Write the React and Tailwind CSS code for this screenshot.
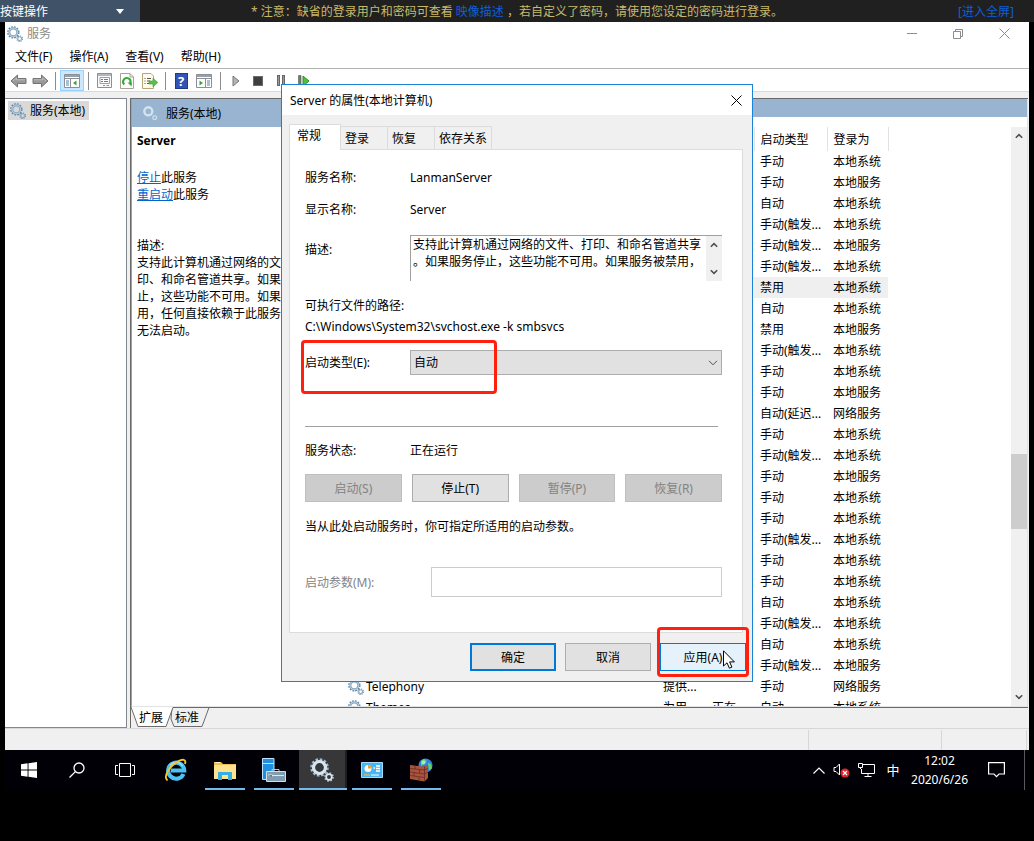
import { useState } from 'react'

const M = '手动'
const A = '自动'
const T = '手动(触发...'
const SYS = '本地系统'
const LOC = '本地服务'
const NET = '网络服务'

const services = [
  { start: M, user: SYS },
  { start: M, user: LOC },
  { start: A, user: SYS },
  { start: T, user: SYS },
  { start: T, user: LOC },
  { start: T, user: SYS },
  { start: '禁用', user: SYS, selected: true },
  { start: A, user: SYS },
  { start: '禁用', user: LOC },
  { start: T, user: SYS },
  { start: M, user: SYS },
  { start: M, user: LOC },
  { start: '自动(延迟...', user: NET },
  { start: M, user: SYS },
  { start: T, user: SYS },
  { start: M, user: LOC },
  { start: M, user: SYS },
  { start: M, user: SYS },
  { start: T, user: SYS },
  { start: M, user: SYS },
  { start: M, user: SYS },
  { start: A, user: SYS },
  { start: T, user: SYS },
  { start: A, user: SYS },
  { start: T, user: LOC },
  { name: 'Telephony', desc: '提供...', start: M, user: NET },
  { name: 'Themes', desc: '为用...', status: '正在...', start: A, user: SYS },
]

function Gears({ className = 'w-4 h-4', light = false }) {
  const main = light ? '#d8e6f0' : '#86a9c3'
  const edge = light ? '#9fb9cc' : '#5d829d'
  return (
    <svg viewBox="0 0 24 24" className={`shrink-0 ${className}`} fill="none">
      <circle cx="9.500" cy="9.500" r="8" stroke={edge} strokeWidth="2.600" strokeDasharray="2.500 1.690" />
      <circle cx="9.500" cy="9.500" r="6" stroke={main} strokeWidth="3.200" />
      <circle cx="9.500" cy="9.500" r="6.600" stroke="#cfe3f1" strokeWidth="1" />
      <circle cx="19" cy="19" r="4" stroke={edge} strokeWidth="1.800" strokeDasharray="1.600 1.540" />
      <circle cx="19" cy="19" r="2.800" stroke={main} strokeWidth="1.700" />
    </svg>
  )
}

function Chevron({ dir = 'down', className = 'w-2 h-[6px]', width = 2 }) {
  return (
    <svg viewBox="0 0 10 6" className={className} fill="none" stroke="#505050" strokeWidth={width}>
      <path d={dir === 'up' ? 'M1 5.200L5 1.200L9 5.200' : 'M1 .8L5 4.800L9 .8'} />
    </svg>
  )
}

function Close({ color }) {
  return (
    <svg viewBox="0 0 11 11" className="w-[11px] h-[11px]" stroke={color} fill="none">
      <path d="M.5 .5L10.500 10.500M10.500 .5L.5 10.500" />
    </svg>
  )
}

function Arrow({ flip }) {
  return (
    <svg viewBox="0 0 17 14" className={`w-[17px] h-[14px] ${flip ? '-scale-x-100' : ''}`}>
      <path d="M1 7L7.500 1V4.500H16V9.500H7.500V13Z" fill="#999" stroke="#757575" strokeLinejoin="round" />
      <path d="M3 7L6.500 4V5.800H15" fill="none" stroke="#bdbdbd" />
    </svg>
  )
}

function Panes({ right }) {
  return (
    <svg viewBox="0 0 16 14" className="w-4 h-[14px]">
      <path d="M.5 .5H15.500V13.500H.5Z" fill="#fff" stroke="#8b8f96" />
      <path d="M1 1H15V3H1Z" fill="#9aa0a8" />
      <path d="M1 4.500H15" stroke="#8b8f96" />
      <path d={right ? 'M9.500 5V13' : 'M6.500 5V13'} stroke="#8b8f96" />
      <path d={right ? 'M11 7H14M11 9H14M11 11H14' : 'M2 7H5M2 9H5M2 11H5'} stroke="#5a7fae" />
      <path d={right ? 'M3.500 6.500L7 9L3.500 11.500Z' : 'M12.500 6.500L9 9L12.500 11.500Z'} fill="#37a637" />
    </svg>
  )
}

function Separator() {
  return <span className="w-px h-[18px] mx-1 bg-[#8d8d8d]" />
}

function ToolButton({ label, wide, active, children }) {
  return (
    <button
      type="button"
      aria-label={label}
      className={`h-[21px] flex items-center justify-center ${wide ? 'w-6' : 'w-[22px]'} ${
        active ? 'bg-[#cce8ff] border border-[#99d1ff]' : ''
      }`}
    >
      {children}
    </button>
  )
}

function Toolbar() {
  return (
    <div className="flex items-center h-[23px] pl-[2px] pt-px border-b border-[#dadada]">
      <ToolButton label="后退"><Arrow /></ToolButton>
      <ToolButton label="前进"><Arrow flip /></ToolButton>
      <Separator />
      <ToolButton label="显示控制台树" active wide><Panes /></ToolButton>
      <Separator />
      <ToolButton label="属性">
        <svg viewBox="0 0 15 15" className="w-[15px] h-[15px]">
          <path d="M.5 .5H14.500V14.500H.5Z" fill="#fafafa" stroke="#8b8f96" />
          <path d="M1 1H14V3H1Z" fill="#b3b8be" />
          <path d="M3 4.500H12.500V10.500H3Z" fill="#fff" stroke="#9aa0a8" />
          <path d="M4 6.500H6M7 6.500H11M4 8.500H6M7 8.500H11" stroke="#5a7fae" />
          <path d="M6 12.500H8M9.500 12.500H12" stroke="#8b8f96" />
        </svg>
      </ToolButton>
      <ToolButton label="刷新" wide>
        <svg viewBox="0 0 14 16" className="w-[14px] h-4">
          <path d="M.5 .5H10L13.500 4V15.500H.5Z" fill="#fff" stroke="#a8a390" />
          <path d="M10 .5V4H13.500" fill="none" stroke="#a8a390" />
          <path d="M4.300 11.500A3.700 3.700 0 1 1 10.300 10" fill="none" stroke="#35a835" strokeWidth="2" />
          <path d="M7.500 9.500H12L11.500 13.500Z" fill="#35a835" />
        </svg>
      </ToolButton>
      <ToolButton label="导出列表">
        <svg viewBox="0 0 16 16" className="w-4 h-4">
          <path d="M.5 .5H9L11.500 3V15.500H.5Z" fill="#fffceb" stroke="#b5a878" />
          <path d="M2.500 5.500H3.500M5 5.500H9M2.500 8H3.500M5 8H8M2.500 10.500H3.500M5 10.500H8" stroke="#555" />
          <path d="M7 8H11V5.200L15.800 9.500L11 13.800V11H7Z" fill="#56c247" stroke="#3a9d33" strokeWidth=".6" />
        </svg>
      </ToolButton>
      <Separator />
      <ToolButton label="帮助">
        <span className="w-[13px] h-4 bg-[#3354b5] border border-[#1f3a8a] text-white text-[13px] leading-[14px] font-bold">?</span>
      </ToolButton>
      <ToolButton label="显示操作窗格" wide><Panes right /></ToolButton>
      <Separator />
      <ToolButton label="启动服务">
        <svg viewBox="0 0 8 12" className="w-2 h-3"><path d="M1 1L7 6L1 11Z" fill="#b5b5b5" stroke="#777" /></svg>
      </ToolButton>
      <ToolButton label="停止服务"><span className="w-[10px] h-[10px] bg-[#3f3f3f] border border-[#6a6a6a]" /></ToolButton>
      <ToolButton label="暂停服务" wide>
        <span className="flex gap-[2px]">
          <span className="w-[3px] h-[11px] bg-[#999] border border-[#666]" />
          <span className="w-[3px] h-[11px] bg-[#999] border border-[#666]" />
        </span>
      </ToolButton>
      <ToolButton label="重启动服务">
        <svg viewBox="0 0 12 12" className="w-3 h-3">
          <path d="M.5 .5H3V11.500H.5Z" fill="#777" stroke="#555" strokeWidth=".6" />
          <path d="M5 1L11 6L5 11Z" fill="#4cc33a" stroke="#2a8f22" />
        </svg>
      </ToolButton>
    </div>
  )
}

function ServiceTable() {
  return (
    <table className="table-fixed w-[543px] h-fit border-collapse text-left">
      <colgroup>
        <col className="w-[312px]" />
        <col className="w-[49px]" />
        <col className="w-[48px]" />
        <col className="w-[73px]" />
        <col className="w-[61px]" />
      </colgroup>
      <thead>
        <tr className="h-6">
          <th className="p-0 pl-5 font-normal border-r border-[#e2e2e2]">名称</th>
          <th className="p-0 pl-[6px] font-normal border-r border-[#e2e2e2]">描述</th>
          <th className="p-0 pl-[6px] font-normal border-r border-[#e2e2e2]">状态</th>
          <th className="p-0 pl-[6px] font-normal border-r border-[#e2e2e2]">启动类型</th>
          <th className="p-0 pl-[6px] font-normal border-r border-[#e2e2e2]">登录为</th>
        </tr>
      </thead>
      <tbody>
        {services.map((s, i) => (
          <tr key={i} className={`h-[21px] whitespace-nowrap ${s.selected ? 'bg-[#efefef]' : ''}`}>
            <td className="p-0 pl-[3px]">
              {s.name && (
                <span className="flex items-center gap-[2px]">
                  <Gears />
                  {s.name}
                </span>
              )}
            </td>
            <td className="p-0 pl-[6px]">{s.desc}</td>
            <td className="p-0 pl-[6px]">{s.status}</td>
            <td className="p-0 pl-[6px]">{s.start}</td>
            <td className="p-0 pl-[6px]">{s.user}</td>
          </tr>
        ))}
      </tbody>
    </table>
  )
}

function Sheets() {
  return (
    <div className="relative h-[21px] bg-[#f0f0f0] border-t border-[#696969]">
      <svg viewBox="0 0 80 20" className="absolute left-0 -top-px w-20 h-5" fill="none" stroke="#6b6b6b">
        <path d="M41 .5H78L71 19.500H43L40 12Z" fill="#f0f0f0" />
        <path d="M0 0L7 19.500H35L42 0Z" fill="#fff" stroke="none" />
        <path d="M0 0L7 19.500H35L42 .5" />
      </svg>
      <div className="relative flex gap-3 pl-2 leading-[20px]">
        <button type="button">扩展</button>
        <button type="button">标准</button>
      </div>
    </div>
  )
}

function PushButton({ children, disabled, className = 'border-[#adadad] bg-[#e1e1e1]' }) {
  return (
    <button
      type="button"
      disabled={disabled}
      className={`h-7 border text-center disabled:bg-[#ccc] disabled:border-[#bfbfbf] disabled:text-[#838383] ${className}`}
    >
      {children}
    </button>
  )
}

const tabs = ['常规', '登录', '恢复', '依存关系']

function PropertiesDialog() {
  const [tab, setTab] = useState(0)
  const [startType, setStartType] = useState('自动')

  return (
    <div role="dialog" aria-label="Server 的属性" className="absolute left-[276px] top-[62px] w-[472px] bg-[#f0f0f0] border border-[#1883d7]">
      <div className="flex items-center justify-between h-[30px] pl-2 pr-[10px] bg-white">
        <h2>Server 的属性(本地计算机)</h2>
        <button type="button" aria-label="关闭"><Close color="#000" /></button>
      </div>

      <div className="pl-[7px] pr-[9px] pt-[9px] pb-[10px]">
        <div className="flex items-end">
          {tabs.map((t, i) => (
            <button
              key={t}
              type="button"
              onClick={() => setTab(i)}
              className={
                i === tab
                  ? 'relative -mb-px h-[26px] w-[52px] pl-[7px] pb-1 text-left bg-white border border-b-0 border-[#dcdcdc]'
                  : 'h-[23px] px-[4px] min-w-[47px] text-left border border-l-0 border-b-0 border-[#dcdcdc]'
              }
            >
              {t}
            </button>
          ))}
        </div>

        <div className="bg-white border border-[#dcdcdc] pl-[15px] pr-5 pt-3 pb-[35px]">
          <dl className="grid grid-cols-[105px_1fr] leading-8">
            <dt>服务名称:</dt>
            <dd>LanmanServer</dd>
            <dt>显示名称:</dt>
            <dd>Server</dd>
          </dl>

          <div className="flex mt-[9px]">
            <label htmlFor="desc" className="w-[105px] pt-[6px]">描述:</label>
            <div className="flex flex-1 h-[46px] border-t border-l border-[#a0a0a0]">
              <textarea
                id="desc"
                readOnly
                className="flex-1 resize-none overflow-hidden pl-[2px] outline-none [line-break:anywhere]"
                value="支持此计算机通过网络的文件、打印、和命名管道共享。如果服务停止，这些功能不可用。如果服务被禁用，"
              />
              <div className="flex flex-col items-center justify-between w-4 py-[6px] bg-[#f0f0f0]">
                <Chevron dir="up" />
                <Chevron />
              </div>
            </div>
          </div>

          <p className="mt-4">可执行文件的路径:</p>
          <p className="mt-1">C:\Windows\System32\svchost.exe -k smbsvcs</p>

          <div className="relative flex items-center mt-[15px]">
            <label htmlFor="start" className="w-[105px]">启动类型(E):</label>
            <div className="relative flex-1">
              <select
                id="start"
                value={startType}
                onChange={e => setStartType(e.target.value)}
                className="block w-full h-[25px] pl-[3px] appearance-none bg-[#e1e1e1] border border-[#adadad]"
              >
                <option>自动</option>
                <option>手动</option>
                <option>禁用</option>
              </select>
              <span className="absolute right-1 top-[10px] pointer-events-none">
                <Chevron className="w-[10px] h-[6px]" width={1} />
              </span>
            </div>
            <span className="absolute -left-1 -top-[10px] w-[196px] h-[54px] border-3 border-[#ff2010] rounded-sm pointer-events-none" />
          </div>

          <hr className="mt-[51px] mr-1 border-[#a0a0a0]" />

          <div className="flex mt-[15px]">
            <span className="w-[105px]">服务状态:</span>
            <span>正在运行</span>
          </div>

          <div className="grid grid-cols-4 gap-[10px] mt-[15px]">
            <PushButton disabled>启动(S)</PushButton>
            <PushButton>停止(T)</PushButton>
            <PushButton disabled>暂停(P)</PushButton>
            <PushButton disabled>恢复(R)</PushButton>
          </div>

          <p className="mt-4">当从此处启动服务时，你可指定所适用的启动参数。</p>

          <div className="flex items-center mt-8">
            <label htmlFor="params" className="w-[126px] text-[#838383]">启动参数(M):</label>
            <input id="params" type="text" disabled className="flex-1 h-[30px] px-1 bg-white border border-[#ccc]" />
          </div>
        </div>

        <div className="relative flex justify-end gap-[9px] mt-[10px] -mr-[3px]">
          <PushButton className="w-[86px] bg-[#e1e1e1] border-2 border-[#0078d7]">确定</PushButton>
          <PushButton className="w-[86px] bg-[#e1e1e1] border-[#adadad]">取消</PushButton>
          <PushButton className="w-[86px] bg-[#e5f1fb] border-[#0078d7]">应用(A)</PushButton>
          <span className="absolute -right-[3px] -top-4 w-[92px] h-[50px] border-3 border-[#ff2010] rounded-sm pointer-events-none" />
          <svg viewBox="0 0 12 19" className="absolute right-[11px] top-[7px] w-3 h-[19px]">
            <path d="M.5 .8V16L4 12.800L6.400 18.200L8.900 17.100L6.600 11.900H11.400Z" fill="#fff" stroke="#000" />
          </svg>
        </div>
      </div>
    </div>
  )
}

function TaskItem({ label, running, active, children }) {
  return (
    <button
      type="button"
      aria-label={label}
      className={`relative flex items-center justify-center w-12 h-10 ${active ? 'bg-[#37373a] border-r-2 border-[#1e1e20]' : ''}`}
    >
      {children}
      {running && (
        <span className={`absolute bottom-0 h-[2px] bg-[#76b9ed] ${active ? 'left-0 -right-[2px]' : 'inset-x-1'}`} />
      )}
    </button>
  )
}

function Taskbar() {
  return (
    <div className="flex items-center h-10 bg-[#000006] text-white">
      <TaskItem label="开始">
        <svg viewBox="0 0 16 16" className="w-4 h-4" fill="#fff">
          <path d="M0 2.200L6.600 1.300V7.600H0ZM7.500 1.200L16 0V7.600H7.500ZM0 8.400H6.600V14.700L0 13.800ZM7.500 8.400H16V16L7.500 14.800Z" />
        </svg>
      </TaskItem>
      <TaskItem label="搜索">
        <svg viewBox="0 0 16 16" className="w-4 h-4" fill="none" stroke="#fff" strokeWidth="1.300">
          <circle cx="10" cy="6" r="5" />
          <path d="M6.400 9.600L.5 15.500" />
        </svg>
      </TaskItem>
      <TaskItem label="任务视图">
        <svg viewBox="0 0 20 14" className="w-5 h-[14px]" fill="none" stroke="#fff">
          <path d="M4.500 .5H15.500V13.500H4.500ZM3 2.500H.5V11.500H3M17 2.500H19.500V11.500H17" />
        </svg>
      </TaskItem>
      <div className="flex gap-px ml-[3px]">
        <TaskItem label="Internet Explorer">
          <svg viewBox="0 0 24 24" className="w-6 h-6" fill="none">
            <path d="M19.500 16A8 8 0 1 1 20.200 12.500H7" stroke="#4cc2f4" strokeWidth="4.200" />
            <path d="M18.500 8A7.500 7.500 0 0 0 6 7.500" stroke="#a6e6fd" strokeWidth="1.200" />
            <path d="M3.500 22.500C-1 19 5 8 14 3.300C18.500 1 22.500 1 21 6" stroke="#f5c42c" strokeWidth="1.900" />
          </svg>
        </TaskItem>
        <TaskItem label="文件资源管理器" running>
          <svg viewBox="0 0 22 19" className="w-[22px] h-[19px]">
            <path d="M0 1H7L9 3H22V18H0Z" fill="#eebf55" />
            <path d="M1 4H22V18H0V5Z" fill="#fde38f" />
            <path d="M1.500 1.500H6" stroke="#fff3c4" />
            <path d="M4 11H18V19H14V14H8V19H4Z" fill="#35aee2" />
          </svg>
        </TaskItem>
        <TaskItem label="服务器管理器" running>
          <svg viewBox="0 0 24 24" className="w-6 h-6">
            <path d="M.5 .5H12V21.500H.5Z" fill="#1f8fe0" stroke="#bfe2fa" />
            <path d="M.5 5.500H12" stroke="#bfe2fa" />
            <path d="M10 13.500V11.500H17V13.500" fill="none" stroke="#b9c8d2" />
            <path d="M4.500 13.500H23.500V23.500H4.500Z" fill="#7f9cb0" stroke="#d3e0e8" />
            <path d="M6 17H10.500V18.500M11 17.500H22" stroke="#dfe9ef" />
          </svg>
        </TaskItem>
        <TaskItem label="服务" running active><Gears className="w-6 h-6" light /></TaskItem>
        <TaskItem label="控制面板" running>
          <svg viewBox="0 0 22 16" className="w-[22px] h-4">
            <path d="M.5 .5H21.500V15.500H.5Z" fill="#48b4f0" stroke="#a5dcfb" />
            <circle cx="7" cy="6.500" r="3.500" fill="#fff" />
            <path d="M7 6.500V3A3.500 3.500 0 0 1 10.500 6.500Z" fill="#f29a2e" />
            <path d="M12.500 6H14M15 4H19M15 6.500H19M15 9H19" stroke="#fff" strokeWidth="1.400" />
            <path d="M3 13H9" stroke="#f5b53c" strokeWidth="1.400" />
            <path d="M10 13H18" stroke="#fff" />
          </svg>
        </TaskItem>
        <TaskItem label="防火墙" running>
          <svg viewBox="0 0 24 24" className="w-6 h-6">
            <circle cx="16.500" cy="7.500" r="7" fill="#2f86e0" />
            <path d="M12 3C14 0 18 1 17.500 3.500C16 6 13 7 12 8ZM19 5C22 5 23.500 8 22.500 11L20 12Z" fill="#6ed05a" />
            <circle cx="14.500" cy="4.500" r="2" fill="#c5edff" opacity=".7" />
            <path d="M1 7L13 8.500L19 7V20L15.500 23.500L1 21Z" fill="#a8553f" />
            <path d="M1 10.500L15.500 12M1 14L15.500 16M1 17.500L15.500 19.500M6 7.800V11M10.500 11.500V15M5 14.500V18M10 19V22.500M15.500 8.500V23M15.500 12L19 10.500M15.500 16L19 14" stroke="#6b2c20" strokeWidth=".8" />
          </svg>
        </TaskItem>
      </div>

      <div className="flex items-center gap-2 ml-auto h-full">
        <button type="button" aria-label="显示隐藏的图标">
          <svg viewBox="0 0 12 7" className="w-3 h-[7px]" fill="none" stroke="#fff" strokeWidth="1.200"><path d="M.5 6.500L6 1L11.500 6.500" /></svg>
        </button>
        <svg viewBox="0 0 17 15" className="w-[17px] h-[15px]" fill="none">
          <path d="M1 4.500H3L6.500 1V12L3 8.500H1Z" stroke="#fff" />
          <circle cx="12" cy="10" r="4.500" fill="#e0242c" />
          <path d="M10 8L14 12M14 8L10 12" stroke="#fff" strokeWidth="1.200" />
        </svg>
        <svg viewBox="0 0 17 14" className="w-[17px] h-[14px]" fill="none" stroke="#fff">
          <path d="M5 1.500H16.500V10.500H3.500V6M10 10.500V13M6.500 13.500H13.500M.5 .5H4.500V4.500H.5ZM2.500 4.500V6" />
        </svg>
        <span className="w-5 text-center text-[13px]">中</span>
        <div className="text-center text-[12px] leading-[19px]">
          <p>12:02</p>
          <p>2020/6/26</p>
        </div>
        <button type="button" aria-label="通知" className="ml-3 mr-2">
          <svg viewBox="0 0 17 16" className="w-[17px] h-4" fill="none" stroke="#fff" strokeWidth="1.200">
            <path d="M.6 .6H16.400V12H11L8.500 14.600L6 12H.6Z" />
          </svg>
        </button>
        <span className="w-px h-full ml-[3px] mr-1 bg-[#5a5a5c]" />
      </div>
    </div>
  )
}

export default function App() {
  return (
    <div className="min-h-screen bg-black text-black text-[12px] leading-[17px] font-['Noto_Sans','Noto_Sans_CJK_SC',sans-serif]">
      <header className="flex items-center h-[22px] bg-[#202020]">
        <button type="button" className="flex items-center justify-between w-[140px] h-full pr-4 bg-[#3f5268] text-white">
          按键操作
          <svg viewBox="0 0 8 5" className="w-2 h-[5px]" fill="#fff"><path d="M0 0H8L4 5Z" /></svg>
        </button>
        <p className="flex-1 text-center text-[#c9ba69]">
          * 注意：缺省的登录用户和密码可查看 <a href="#image" className="text-[#0e5fd8]">映像描述</a> ，若自定义了密码，请使用您设定的密码进行登录。
        </p>
        <a href="#fullscreen" className="w-[140px] pr-5 text-right text-[#0e5fd8]">[进入全屏]</a>
      </header>

      <div className="relative mx-[5px]">
        <div className="bg-white">
          <div className="flex items-center h-[23px] pl-[2px] text-[#8c8c8c]">
            <Gears />
            <h1 className="ml-1">服务</h1>
            <div className="flex items-center gap-9 ml-auto pr-[19px]">
              <button type="button" aria-label="最小化" className="w-[10px] h-px bg-[#8c8c8c]" />
              <button type="button" aria-label="还原">
                <svg viewBox="0 0 10 10" className="w-[10px] h-[10px]" fill="none" stroke="#8c8c8c">
                  <path d="M.5 2.500H7.500V9.500H.5ZM2.500 2.500V.5H9.500V7.500H7.500" />
                </svg>
              </button>
              <button type="button" aria-label="关闭"><Close color="#8c8c8c" /></button>
            </div>
          </div>
          <nav className="flex gap-[17px] h-6 pl-[10px] items-center border-b border-[#b4b4b4]">
            <button type="button">文件(F)</button>
            <button type="button">操作(A)</button>
            <button type="button">查看(V)</button>
            <button type="button">帮助(H)</button>
          </nav>
          <Toolbar />
        </div>

        <main className="flex gap-[3px] pt-[6px] pr-px bg-[#f0f0f0]">
          <aside className="w-[122px] bg-white border-t border-r border-b border-[#828790]">
            <a href="#services" className="inline-flex items-center gap-1 h-[19px] mt-[2px] ml-[3px] pl-[2px] pr-1 bg-[#d9d9d9]">
              <Gears />
              服务(本地)
            </a>
          </aside>

          <section className="flex-1 min-w-0 flex flex-col border-t border-l border-[#696969]">
            <div className="flex border-l border-r border-b border-[#e3e3e3] border-l-[#a0a0a0] bg-white">
              <div className="w-[213px]">
                <div className="flex items-center gap-2 h-7 pl-[10px] bg-[#99b4d1]">
                  <Gears light />
                  服务(本地)
                </div>
                <div className="pl-[5px] pr-3 pt-[5px]">
                  <h3 className="font-bold">Server</h3>
                  <p className="mt-5"><a href="#stop" className="text-[#0066cc] underline">停止</a>此服务</p>
                  <p><a href="#restart" className="text-[#0066cc] underline">重启动</a>此服务</p>
                  <p className="mt-[34px]">描述:</p>
                  <p>支持此计算机通过网络的文件、打印、和命名管道共享。如果服务停止，这些功能不可用。如果服务被禁用，任何直接依赖于此服务的服务将无法启动。</p>
                </div>
              </div>
              <div className="flex-1 min-w-0">
                <div className="h-[18px] mb-[10px] bg-[#99b4d1]" />
                <div className="flex justify-between h-[579px] overflow-hidden">
                  <ServiceTable />
                  <div className="relative flex flex-col items-center justify-between w-4 py-[6px] bg-[#f0f0f0]">
                    <Chevron dir="up" />
                    <span className="absolute inset-x-0 top-[327px] h-[75px] bg-[#cdcdcd]" />
                    <Chevron />
                  </div>
                </div>
              </div>
            </div>
            <Sheets />
          </section>
        </main>

        <footer className="flex justify-end h-[22px] pt-px pr-[2px] bg-[#f0f0f0] border-t border-[#d7d7d7]">
          <span className="w-[133px] border-l border-[#d7d7d7]" />
          <span className="w-[86px] border-x border-[#d7d7d7]" />
        </footer>

        <Taskbar />
        <PropertiesDialog />
      </div>
    </div>
  )
}
